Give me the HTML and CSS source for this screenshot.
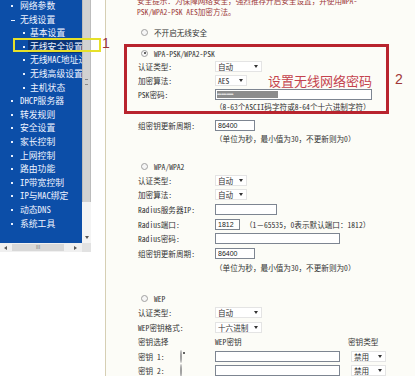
FILE: index.html
```html
<!DOCTYPE html>
<html lang="zh-CN">
<head>
  <meta charset="UTF-8" />
  <title>无线安全设置</title>
  <link rel="stylesheet" href="styles.css">
</head>
<body>
<div class="page">

  <div class="side">
    <div class="menu-frame">
      <div class="menu">
        <ul class="nav">
          <li class="top">网络参数</li>
          <li class="top open">无线设置</li>
          <li class="sub">基本设置</li>
          <li class="sub cur"><span>无线安全设置</span></li>
          <li class="sub">无线MAC地址过滤</li>
          <li class="sub">无线高级设置</li>
          <li class="sub">主机状态</li>
          <li class="top">DHCP服务器</li>
          <li class="top">转发规则</li>
          <li class="top">安全设置</li>
          <li class="top">家长控制</li>
          <li class="top">上网控制</li>
          <li class="top">路由功能</li>
          <li class="top">IP带宽控制</li>
          <li class="top">IP与MAC绑定</li>
          <li class="top">动态DNS</li>
          <li class="top">系统工具</li>
        </ul>
      </div>
      <div class="vscroll">
        <div class="vthumb"><i class="grip"></i></div>
        <div class="vtrack"></div>
        <div class="arrow-down"></div>
      </div>
    </div>
    <div class="hscroll">
      <span class="arrow-left"></span>
      <span class="hthumb">III</span>
      <span class="arrow-right"></span>
      <span class="corner"></span>
    </div>
  </div>

  <div class="main">
    <p class="tip">安全提示：为保障网络安全，强烈推荐开启安全设置，并使用WPA-<br>PSK/WPA2-PSK AES加密方法。</p>

    <div class="row opt first-opt"><span class="radio"></span>不开启无线安全</div>

    <div class="box-wrap">
      <div class="wpa-box">
        <div class="row opt r1"><span class="radio on"></span>WPA-PSK/WPA2-PSK</div>
        <div class="row"><span class="lbl">认证类型:</span><span class="sel w47">自动</span></div>
        <div class="row"><span class="lbl">加密算法:</span><span class="sel w32">AES</span><span class="note">设置无线网络密码</span></div>
        <div class="row"><span class="lbl">PSK密码:</span><span class="pwd"><span class="mosaic">••• •••• ••••••</span></span></div>
        <div class="row hint in-box"><span class="lbl"></span>（8-63个ASCII码字符或8-64个十六进制字符）</div>
      </div>
      <span class="mark2">2</span>
    </div>

    <div class="row after-box"><span class="lbl">组密钥更新周期:</span><input class="w40" type="text" value="86400"></div>
    <div class="row hint"><span class="lbl"></span>（单位为秒，最小值为30，不更新则为0）</div>

    <div class="row opt sec"><span class="radio"></span>WPA/WPA2</div>
    <div class="row tall"><span class="lbl">认证类型:</span><span class="sel w32">自动</span></div>
    <div class="row tall"><span class="lbl">加密算法:</span><span class="sel w32">自动</span></div>
    <div class="row tall"><span class="lbl">Radius服务器IP:</span><input class="w62" type="text" value=""></div>
    <div class="row tall"><span class="lbl">Radius端口:</span><input class="w24" type="text" value="1812"><span class="aside">（1－65535，0表示默认端口：1812）</span></div>
    <div class="row tall"><span class="lbl">Radius密码:</span><input class="w125" type="text" value=""></div>
    <div class="row tall"><span class="lbl">组密钥更新周期:</span><input class="w40" type="text" value="86400"></div>
    <div class="row tall hint"><span class="lbl"></span>（单位为秒，最小值为30，不更新则为0）</div>

    <div class="row opt sec2"><span class="radio"></span>WEP</div>
    <div class="row tall"><span class="lbl">认证类型:</span><span class="sel w47">自动</span></div>
    <div class="row tall"><span class="lbl">WEP密钥格式:</span><span class="sel w47">十六进制</span></div>
    <div class="row tall"><span class="lbl">密钥选择</span><span class="keycol">WEP密钥</span><span>密钥类型</span></div>
    <div class="row tall"><span class="klbl">密钥 1:</span><span class="kradio"><span class="radio on"></span></span><input class="w125" type="text" value=""><span class="sel w35 ksel">禁用</span></div>
    <div class="row tall"><span class="klbl">密钥 2:</span><span class="kradio"><span class="radio"></span></span><input class="w125" type="text" value=""><span class="sel w35 ksel">禁用</span></div>
  </div>

  <div class="mark-box"></div>
  <span class="mark1">1</span>
</div>
</body>
</html>
```

FILE: styles.css
```css
body {
  margin: 0;
  background: #fcfcf7;
  font-family: "Noto Sans Mono CJK SC", "Noto Sans CJK SC", "Liberation Mono", monospace;
  color: #333;
  overflow: hidden;
}
.page {
  position: relative;
  display: flex;
  width: 415px;
  height: 376px;
  overflow: hidden;
}

/* left menu frame */
.side {
  width: 105px;
  flex: none;
  background: #fff;
  border-right: 1px solid #d6cfb4;
}
.menu-frame { display: flex; }
.menu {
  width: 82px;
  height: 243px;
  background: #0c4ea8;
  overflow: hidden;
}
.nav {
  list-style: none;
  margin: -1px 0 0;
  padding: 0;
  font-size: 8.8px;
  line-height: 13.6px;
  color: #eef3ff;
  white-space: nowrap;
}
.nav li { position: relative; }
.nav li::before {
  content: "";
  position: absolute;
  top: 6px;
  width: 2px;
  height: 2px;
  background: #e8f0ff;
}
.nav .top { padding-left: 20px; }
.nav .top::before { left: 11px; }
.nav .open::before { width: 4px; height: 1px; left: 11px; top: 7px; }
.nav .sub { padding-left: 30px; }
.nav .sub::before { left: 23px; }
.nav .cur span {
  background: #0a3478;
  padding: 0 12px 0 2px;
  margin-left: -2px;
}

.vscroll {
  width: 9px;
  height: 243px;
  background: #f4f4f4;
  display: flex;
  flex-direction: column;
}
.vthumb {
  height: 202px;
  background: #d2d2d2;
  border-left: 1px solid #bdbdbd;
  border-right: 1px solid #bdbdbd;
  position: relative;
}
.grip {
  position: absolute;
  left: 2px;
  top: 79px;
  width: 3px;
  height: 4px;
  border-top: 1px solid #888;
  border-bottom: 1px solid #888;
}
.vtrack { flex: 1; }
.arrow-down {
  width: 0;
  height: 0;
  margin: 0 auto 4px;
  border-top: 3px solid #555;
  border-left: 2px solid transparent;
  border-right: 2px solid transparent;
}
.hscroll {
  display: flex;
  align-items: center;
  width: 91px;
  height: 9px;
  background: #f0f0f0;
}
.arrow-left, .arrow-right {
  width: 0;
  height: 0;
  border-top: 2px solid transparent;
  border-bottom: 2px solid transparent;
}
.arrow-left { border-right: 3px solid #555; margin: 0 5px 0 4px; }
.arrow-right { border-left: 3px solid #555; margin-left: 10px; }
.hthumb {
  width: 52px;
  height: 7px;
  background: #d8d8d8;
  font: 5px/7px "Liberation Sans", sans-serif;
  color: #777;
  text-align: center;
}
.corner {
  margin-left: auto;
  width: 9px;
  height: 9px;
  background: #e2e2e2;
}

/* annotation marks */
.mark-box {
  position: absolute;
  left: 13px;
  top: 38px;
  width: 84px;
  height: 10px;
  border: 2px solid #e6e02a;
}
.mark1 {
  position: absolute;
  left: 102px;
  top: 35px;
  font: 14px "Liberation Sans", sans-serif;
  color: #9e3434;
}

/* main area */
.main {
  flex: 1;
  font-size: 7.6px;
}
.tip {
  margin: -5px 0 0 31px;
  line-height: 11px;
  color: #9c3a3a;
}
.row {
  display: flex;
  align-items: center;
  height: 14px;
  padding-left: 32px;
  white-space: nowrap;
}
.row.tall { height: 14.6px; }
.lbl { width: 77px; flex: none; }
.opt { padding-left: 35px; }
.first-opt { margin-top: 8px; }
.radio {
  width: 7px;
  height: 7px;
  box-sizing: border-box;
  border: 1px solid #a0a0a0;
  border-radius: 50%;
  background: #f6f6f6;
  margin-right: 6px;
  flex: none;
  position: relative;
}
.radio.on::after {
  content: "";
  position: absolute;
  left: 1.5px;
  top: 1.5px;
  width: 2px;
  height: 2px;
  border-radius: 50%;
  background: #333;
}

.box-wrap {
  display: flex;
  align-items: center;
  margin-top: 5px;
}
.wpa-box {
  margin-left: 18px;
  width: 259px;
  border: 3px solid #b8242e;
}
.wpa-box .row { padding-left: 11px; }
.wpa-box .opt { padding-left: 14px; }
.wpa-box .r1 { height: 12px; }
.wpa-box .in-box { height: 10px; }
.mark2 {
  margin-left: 6px;
  font: 14px "Liberation Sans", sans-serif;
  color: #a03636;
}
.note {
  margin-left: 21px;
  font-size: 13px;
  font-family: "Noto Sans CJK SC", sans-serif;
  color: #c4434e;
}

.sel {
  display: inline-flex;
  align-items: center;
  box-sizing: border-box;
  height: 11px;
  padding: 0 3px 0 2px;
  background: #fff;
  border: 1px solid #e4e4e4;
}
.sel::after {
  content: "";
  margin-left: auto;
  border-top: 3px solid #333;
  border-left: 2px solid transparent;
  border-right: 2px solid transparent;
}
.w32 { width: 32px; }
.w35 { width: 35px; }
.w47 { width: 47px; }

input {
  box-sizing: border-box;
  height: 11px;
  margin: 0;
  padding: 0 2px;
  border: 1px solid #7d8591;
  background: #fff;
  font: 7px "Liberation Sans", sans-serif;
  color: #222;
}
.w24 { width: 25px; }
.w40 { width: 40px; }
.w62 { width: 62px; }
.w125 { width: 125px; }

.pwd {
  display: flex;
  align-items: center;
  box-sizing: border-box;
  width: 157px;
  height: 11px;
  padding-left: 1px;
  border: 1px solid #7d8591;
  background: #fff;
}
.mosaic {
  width: 61px;
  height: 7px;
  background: #8c8c8c;
  color: #e4e4e4;
  font: 6px/7px "Liberation Sans", sans-serif;
  letter-spacing: -1px;
  overflow: hidden;
}

.hint { height: 12px; }
.after-box { margin-top: 4px; }
.sec { margin-top: 15px; }
.sec2 { margin-top: 16px; }
.aside { margin-left: 5px; }

.keycol { width: 133px; flex: none; }
.klbl { width: 42px; flex: none; }
.kradio { width: 35px; flex: none; }
.ksel { margin-left: 11px; }
```
